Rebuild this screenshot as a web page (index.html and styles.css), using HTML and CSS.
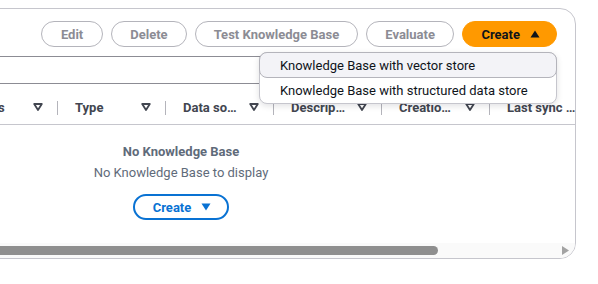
FILE: index.html
```html
<!DOCTYPE html>
<html>
<head>
<meta charset="utf-8">
<link rel="stylesheet" href="styles.css">
</head>
<body>
<div class="card">
  <div class="toolbar">
    <button class="btn disabled">Edit</button>
    <button class="btn disabled">Delete</button>
    <button class="btn disabled wide">Test Knowledge Base</button>
    <button class="btn disabled">Evaluate</button>
    <div class="create-wrap">
      <button class="btn primary">Create <svg class="caret" width="10" height="8" viewBox="0 0 10 8"><polygon points="5,0.5 9.5,7.5 0.5,7.5" fill="#0f141a"/></svg></button>
      <div class="dropdown">
        <div class="item active">Knowledge Base with vector store</div>
        <div class="item">Knowledge Base with structured data store</div>
      </div>
    </div>
  </div>
  <div class="filter-row"><div class="filter-input"></div></div>
  <div class="table-scroll">
    <div class="thead">
      <div class="th sel"></div>
      <div class="th"><span class="label">Name</span><svg class="ficon" width="10" height="8" viewBox="0 0 10 8"><polygon points="1.2,1 8.8,1 5,7" fill="none" stroke="#424650" stroke-width="1.8" stroke-linejoin="round"/></svg></div>
      <div class="th"><span class="label">Status</span><svg class="ficon" width="10" height="8" viewBox="0 0 10 8"><polygon points="1.2,1 8.8,1 5,7" fill="none" stroke="#424650" stroke-width="1.8" stroke-linejoin="round"/></svg></div>
      <div class="th"><span class="label">Type</span><svg class="ficon" width="10" height="8" viewBox="0 0 10 8"><polygon points="1.2,1 8.8,1 5,7" fill="none" stroke="#424650" stroke-width="1.8" stroke-linejoin="round"/></svg></div>
      <div class="th"><span class="label">Data so…</span><svg class="ficon" width="10" height="8" viewBox="0 0 10 8"><polygon points="1.2,1 8.8,1 5,7" fill="none" stroke="#424650" stroke-width="1.8" stroke-linejoin="round"/></svg></div>
      <div class="th"><span class="label">Descrip…</span><svg class="ficon" width="10" height="8" viewBox="0 0 10 8"><polygon points="1.2,1 8.8,1 5,7" fill="none" stroke="#424650" stroke-width="1.8" stroke-linejoin="round"/></svg></div>
      <div class="th"><span class="label">Creatio…</span><svg class="ficon" width="10" height="8" viewBox="0 0 10 8"><polygon points="1.2,1 8.8,1 5,7" fill="none" stroke="#424650" stroke-width="1.8" stroke-linejoin="round"/></svg></div>
      <div class="th last"><span class="label">Last sync …</span></div>
    </div>
    <div class="empty">
      <div class="empty-title">No Knowledge Base</div>
      <div class="empty-sub">No Knowledge Base to display</div>
      <button class="btn outline">Create <svg class="caret" width="10" height="8" viewBox="0 0 10 8"><polygon points="0.5,0.5 9.5,0.5 5,7.5" fill="#0972d3"/></svg></button>
    </div>
  </div>
  <div class="hscroll">
    <div class="thumb"></div>
    <svg class="arrow" width="8" height="9" viewBox="0 0 8 9"><polygon points="0,0 7,4.5 0,9" fill="#a3a3a3"/></svg>
  </div>
</div>
</body>
</html>
```

FILE: styles.css
```css
* { box-sizing: border-box; }
html, body { margin: 0; padding: 0; background: #ffffff; }
body {
  font-family: Roboto, "Open Sans", Arial, sans-serif;
  font-size: 13px;
  color: #0f141a;
  overflow: hidden;
  width: 598px;
  height: 284px;
}
.card {
  margin: 8px 22px 0 -214px;
  border: 1px solid #c6c6cd;
  border-radius: 16px;
  height: 251px;
  display: flex;
  flex-direction: column;
}
.toolbar {
  display: flex;
  justify-content: flex-end;
  align-items: center;
  gap: 8px;
  padding: 12px 18px 0 0;
}
.btn {
  font-family: inherit;
  font-size: 13px;
  font-weight: 700;
  height: 26px;
  border-radius: 20px;
  padding: 0 18.5px;
  display: inline-flex;
  align-items: center;
  gap: 8px;
  cursor: default;
  background: #ffffff;
}
.btn.disabled {
  border: 1.5px solid #b4b4bb;
  color: #8c8c94;
}
.btn.disabled.wide { padding: 0 17.5px; }
.btn.primary {
  background: #ff9900;
  border: 1px solid #ff9900;
  color: #0f141a;
  padding: 0 16px 0 18px;
  gap: 10px;
}
.create-wrap { position: relative; }
.dropdown {
  position: absolute;
  top: 31px;
  right: 0;
  width: 298px;
  background: #ffffff;
  border: 1px solid #c6c6cd;
  border-radius: 8px;
  box-shadow: 0 2px 6px rgba(0, 7, 22, 0.12);
  z-index: 5;
  font-weight: 400;
}
.item {
  height: 25px;
  display: flex;
  align-items: center;
  padding: 0 19px;
  font-size: 13px;
  color: #0f141a;
  border: 1px solid transparent;
}
.item.active {
  background: #f3f3f7;
  border: 1px solid #b4b4bb;
  border-radius: 8px;
  height: 26px;
  margin: -1px -1px 0 -1px;
  padding-left: 20px;
}
.filter-row {
  margin-top: 9px;
  padding-left: 12px;
}
.filter-input {
  height: 28px;
  width: 740px;
  border: 1px solid #8c8c94;
  border-radius: 8px;
}
.table-scroll {
  flex: 1;
  overflow: hidden;
  display: flex;
  flex-direction: column;
}
.thead {
  display: flex;
  margin-top: 8px;
  height: 33px;
  border-bottom: 1px solid #c6c6cd;
  width: 1100px;
  flex-shrink: 0;
}
.th {
  width: 108px;
  flex-shrink: 0;
  display: flex;
  align-items: center;
  justify-content: space-between;
  padding: 0 14px 2px 18px;
  font-weight: 700;
  color: #424650;
  position: relative;
  white-space: nowrap;
}
.th.sel { width: 54px; }
.th::before {
  content: "";
  position: absolute;
  left: 0;
  top: 9px;
  height: 14px;
  border-left: 1px solid #b4b4bb;
}
.th.sel::before, .th:nth-child(2)::before { display: none; }
.th.last { width: 200px; }
.ficon { flex-shrink: 0; }
.empty {
  flex: 1;
  display: flex;
  flex-direction: column;
  align-items: center;
  padding-top: 19px;
  color: #5f6b7a;
}
.empty-title { font-weight: 700; line-height: 16px; }
.empty-sub { line-height: 16px; margin-top: 5px; }
.btn.outline {
  margin-top: 13px;
  border: 2px solid #0972d3;
  color: #0972d3;
  padding: 0 16px 0 18px;
  gap: 10px;
}
.hscroll {
  height: 15px;
  background: #fafafa;
  display: flex;
  align-items: center;
  justify-content: space-between;
  padding-right: 5px;
  border-radius: 0 0 16px 16px;
}
.thumb {
  width: 651px;
  height: 9px;
  background: #8f8f8f;
  border-radius: 0 5px 5px 0;
}
.arrow { display: block; }
```
